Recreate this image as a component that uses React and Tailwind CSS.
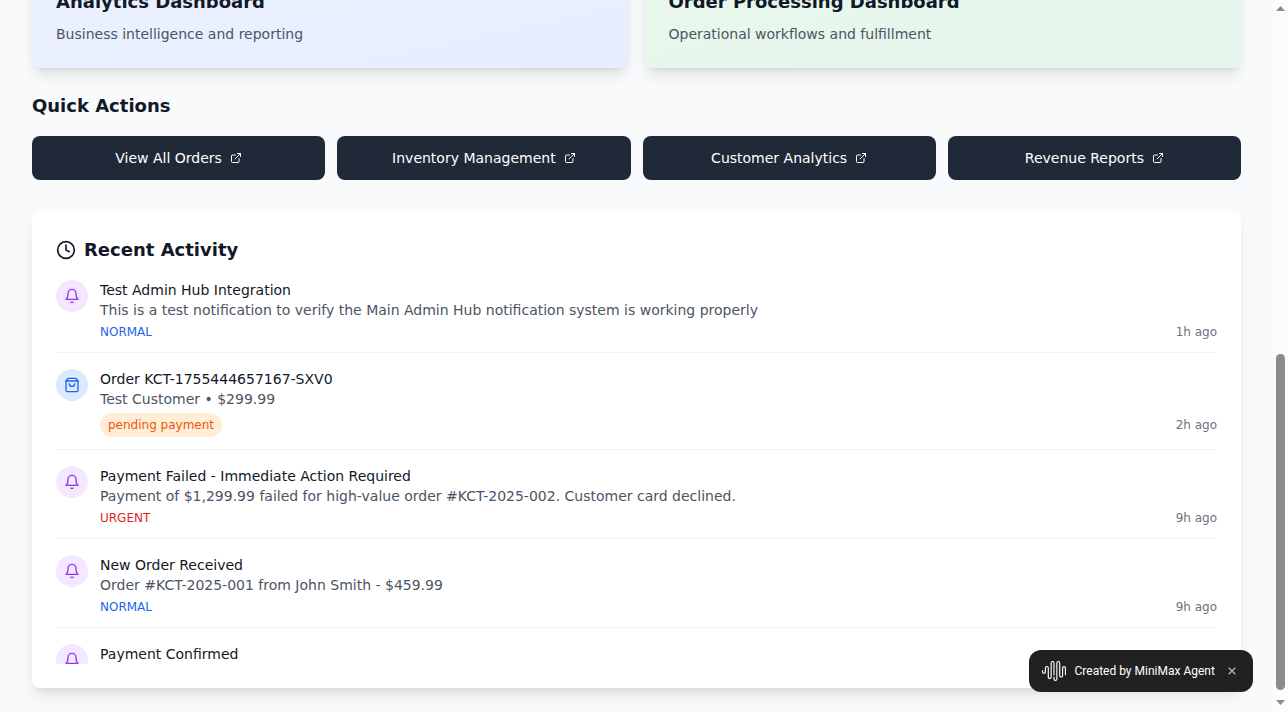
import React from "react";

function Icon({ className, children }) {
  return (
    <svg
      className={className}
      viewBox="0 0 24 24"
      fill="none"
      stroke="currentColor"
      strokeWidth="2"
      strokeLinecap="round"
      strokeLinejoin="round"
    >
      {children}
    </svg>
  );
}

const ExternalLink = () => (
  <Icon className="h-3 w-3 shrink-0">
    <path d="M15 3h6v6" />
    <path d="M10 14 21 3" />
    <path d="M18 13v6a2 2 0 0 1-2 2H5a2 2 0 0 1-2-2V8a2 2 0 0 1 2-2h6" />
  </Icon>
);

const Clock = () => (
  <Icon className="h-5 w-5 shrink-0">
    <circle cx="12" cy="12" r="10" />
    <polyline points="12 6 12 12 16 14" />
  </Icon>
);

const Bell = () => (
  <Icon className="h-4 w-4">
    <path d="M6 8a6 6 0 0 1 12 0c0 7 3 9 3 9H3s3-2 3-9" />
    <path d="M10.3 21a1.94 1.94 0 0 0 3.4 0" />
  </Icon>
);

const Bag = () => (
  <Icon className="h-4 w-4">
    <path d="M6 2 3 6v14a2 2 0 0 0 2 2h14a2 2 0 0 0 2-2V6l-3-4Z" />
    <path d="M3 6h18" />
    <path d="M16 10a4 4 0 0 1-8 0" />
  </Icon>
);

const WaveLogo = () => (
  <svg className="h-6 w-6 shrink-0" viewBox="0 0 24 24" fill="currentColor">
    <path d="M11.43 3.92a.86.86 0 1 0-1.718 0v14.236a1.999 1.999 0 0 1-3.997 0V9.022a.86.86 0 1 0-1.718 0v3.87a1.999 1.999 0 0 1-3.997 0V11.49a.57.57 0 0 1 1.139 0v1.404a.86.86 0 0 0 1.719 0V9.022a1.999 1.999 0 0 1 3.997 0v9.134a.86.86 0 0 0 1.719 0V3.92a1.998 1.998 0 1 1 3.996 0v11.788a.57.57 0 1 1-1.139 0zm10.572 3.105a2 2 0 0 0-1.999 1.997v7.63a.86.86 0 0 1-1.718 0V3.923a1.999 1.999 0 0 0-3.997 0v16.16a.86.86 0 0 1-1.719 0V18.08a.57.57 0 1 0-1.138 0v2a1.998 1.998 0 0 0 3.996 0V3.92a.86.86 0 0 1 1.719 0v12.73a1.999 1.999 0 0 0 3.996 0V9.023a.86.86 0 1 1 1.72 0v6.686a.57.57 0 0 0 1.138 0V9.022a2 2 0 0 0-1.998-1.997" />
  </svg>
);

const dashboards = [
  {
    title: "Analytics Dashboard",
    text: "Business intelligence and reporting",
    tone: "from-[#ebf2fe] to-[#e8edfe]",
  },
  {
    title: "Order Processing Dashboard",
    text: "Operational workflows and fulfillment",
    tone: "from-[#e8f8ed] to-[#e5f5eb]",
  },
];

const actions = ["View All Orders", "Inventory Management", "Customer Analytics", "Revenue Reports"];

const activity = [
  {
    title: "Test Admin Hub Integration",
    text: "This is a test notification to verify the Main Admin Hub notification system is working properly",
    tag: "NORMAL",
    tagTone: "text-[#2563eb]",
    time: "1h ago",
  },
  {
    order: true,
    title: "Order KCT-1755444657167-SXV0",
    text: "Test Customer • $299.99",
    tag: "pending payment",
    tagTone: "rounded-full bg-[#ffedd5] px-2 py-1 text-[#ea580c]",
    time: "2h ago",
  },
  {
    title: "Payment Failed - Immediate Action Required",
    text: "Payment of $1,299.99 failed for high-value order #KCT-2025-002. Customer card declined.",
    tag: "URGENT",
    tagTone: "text-[#dc2626]",
    time: "9h ago",
  },
  {
    title: "New Order Received",
    text: "Order #KCT-2025-001 from John Smith - $459.99",
    tag: "NORMAL",
    tagTone: "text-[#2563eb]",
    time: "9h ago",
  },
  { title: "Payment Confirmed" },
];

function ActivityRow({ item }) {
  return (
    <div className="flex items-start gap-3 border-b border-[#f3f4f6] pb-3">
      <div
        className={
          item.order
            ? "flex h-8 w-8 shrink-0 items-center justify-center rounded-full bg-[#dbeafe] text-[#2563eb]"
            : "flex h-8 w-8 shrink-0 items-center justify-center rounded-full bg-[#f3e8ff] text-[#9333ea]"
        }
      >
        {item.order ? <Bag /> : <Bell />}
      </div>
      <div className="min-w-0 flex-1">
        <p className="text-sm text-[#111827]">{item.title}</p>
        {item.text && <p className="text-sm text-[#4b5563]">{item.text}</p>}
        {item.tag && (
          <div className="mt-1 flex items-center justify-between text-xs">
            <span className={item.tagTone}>{item.tag}</span>
            <span className="text-[#6b7280]">{item.time}</span>
          </div>
        )}
      </div>
    </div>
  );
}

function Scrollbar() {
  return (
    <div className="flex w-[15px] shrink-0 flex-col items-center bg-[#fcfcfc]">
      <svg className="h-4 w-[9px] shrink-0" viewBox="0 0 9 16" fill="#8b8b8b">
        <path d="M0 11 4.5 6 9 11Z" />
      </svg>
      <div className="mt-[338px] h-[336px] w-[9px] rounded-full bg-[#8b8b8b]" />
      <svg className="mt-auto h-4 w-[9px] shrink-0" viewBox="0 0 9 16" fill="#8b8b8b">
        <path d="M0 4 4.5 9 9 4Z" />
      </svg>
    </div>
  );
}

export default function App() {
  return (
    <div className="relative flex h-[712px] w-full overflow-hidden bg-[#f9fafb] font-['DejaVu_Sans',sans-serif]">
      <main className="-mt-[60px] min-w-0 flex-1 px-8">
        <section className="grid grid-cols-2 gap-4">
          {dashboards.map((d) => (
            <article key={d.title} className={`h-32 rounded-lg bg-linear-to-br px-6 pt-12 shadow-lg ${d.tone}`}>
              <h3 className="mb-2 text-lg leading-7 font-bold text-[#111827]">{d.title}</h3>
              <p className="text-sm text-[#4b5563]">{d.text}</p>
            </article>
          ))}
        </section>

        <section className="mt-6">
          <h2 className="mb-4 text-lg leading-7 font-bold text-[#111827]">Quick Actions</h2>
          <div className="grid grid-cols-4 gap-3">
            {actions.map((label) => (
              <button
                key={label}
                className="flex h-11 items-center justify-center gap-2 rounded-lg bg-[#1f2937] text-sm text-white"
              >
                {label}
                <ExternalLink />
              </button>
            ))}
          </div>
        </section>

        <section className="mt-8 rounded-lg bg-white p-6 shadow-lg">
          <h2 className="mb-4 flex items-center gap-2 text-lg leading-7 font-bold text-[#111827]">
            <Clock />
            Recent Activity
          </h2>
          <div className="flex h-96 flex-col gap-4 overflow-hidden">
            {activity.map((item) => (
              <ActivityRow key={item.title} item={item} />
            ))}
          </div>
        </section>
      </main>

      <Scrollbar />

      <div className="absolute right-[35px] bottom-5 flex h-[42px] w-[224px] items-center rounded-xl bg-[#212121] pl-[13px] font-['Roboto',sans-serif] text-xs text-white">
        <WaveLogo />
        <span className="ml-[8.5px] whitespace-nowrap">Created by MiniMax Agent</span>
        <svg className="ml-[13px] h-2 w-2 shrink-0" viewBox="0 0 8 8" stroke="#b5b5b5" strokeWidth="1.3">
          <path d="M.7.7 7.3 7.3M7.3.7.7 7.3" />
        </svg>
      </div>
    </div>
  );
}
